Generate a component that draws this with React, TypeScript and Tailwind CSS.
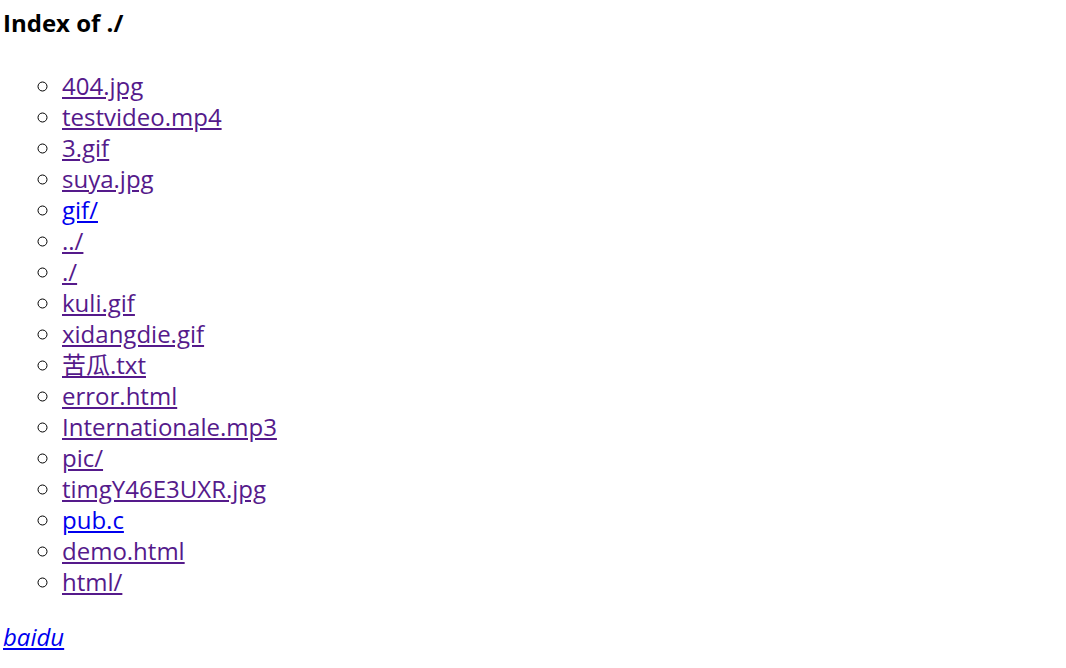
const files: { name: string; visited: boolean }[] = [
  { name: '404.jpg', visited: true },
  { name: 'testvideo.mp4', visited: true },
  { name: '3.gif', visited: true },
  { name: 'suya.jpg', visited: true },
  { name: 'gif/', visited: false },
  { name: '../', visited: true },
  { name: './', visited: true },
  { name: 'kuli.gif', visited: true },
  { name: 'xidangdie.gif', visited: true },
  { name: '苦瓜.txt', visited: true },
  { name: 'error.html', visited: true },
  { name: 'Internationale.mp3', visited: true },
  { name: 'pic/', visited: true },
  { name: 'timgY46E3UXR.jpg', visited: true },
  { name: 'pub.c', visited: false },
  { name: 'demo.html', visited: true },
  { name: 'html/', visited: true },
];

export default function App() {
  return (
    <div
      className="min-h-screen bg-white text-black px-[3px]"
      style={{ fontFamily: '"Open Sans", "Noto Sans CJK SC", sans-serif' }}
    >
      <h4 className="pt-[7px] text-[24px] font-bold leading-[31px]">Index of ./</h4>

      <ul className="mt-[32px] list-[circle] pl-[59px] text-[24px] leading-[31px]">
        {files.map((f) => (
          <li key={f.name}>
            <a
              href={f.name}
              className={`underline ${f.visited ? 'text-[#551a8b]' : 'text-[#0000ee]'}`}
            >
              {f.name}
            </a>
          </li>
        ))}
      </ul>

      <p className="mt-[24px] text-[24px] leading-[31px]">
        <a href="http://www.baidu.com" className="italic underline text-[#0000ee]">
          baidu
        </a>
      </p>
    </div>
  );
}
